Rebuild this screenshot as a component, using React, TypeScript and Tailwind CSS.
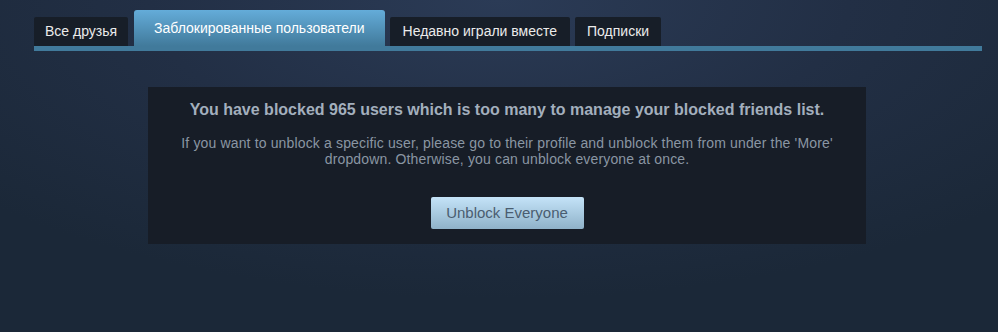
import React from "react";

export default function App() {
  const font = { fontFamily: '"Liberation Sans", Arial, sans-serif' };
  return (
    <div
      className="w-[998px] h-[332px] overflow-hidden bg-[#1b2838] bg-[radial-gradient(ellipse_70%_90%_at_50%_0%,#2b3b56_0%,#222f45_50%,#1b2838_100%)]"
      style={font}
    >
      <div className="pl-[34px] pr-[16px] pt-[10px]">
        <div className="flex items-end gap-[5px] h-[36px]">
          <div className="h-[29px] px-[11px] bg-[#171e28] text-[#ebebeb] text-[14px] flex items-center rounded-t-[2px] mr-[1px]">
            Все друзья
          </div>
          <div className="h-[36px] px-[20px] bg-[linear-gradient(to_bottom,#64acd9,#417a9b)] text-white text-[14px] flex items-start pt-[10px] leading-[16px] rounded-t-[3px]">
            Заблокированные пользователи
          </div>
          <div className="h-[29px] px-[13px] bg-[#171e28] text-[#ebebeb] text-[14px] flex items-center rounded-t-[2px]">
            Недавно играли вместе
          </div>
          <div className="h-[29px] px-[12px] bg-[#171e28] text-[#ebebeb] text-[14px] flex items-center rounded-t-[2px]">
            Подписки
          </div>
        </div>
        <div className="h-[5px] bg-[#417a9b]" />
      </div>
      <div className="mt-[36px] ml-[148px] w-[718px] h-[157px] bg-[#171d27] flex flex-col items-center pt-[13px]">
        <div className="text-[16px] font-bold text-[#a3afbd] leading-[20px]">
          You have blocked 965 users which is too many to manage your blocked friends list.
        </div>
        <div className="mt-[15px] text-[14px] text-[#8a96a3] leading-[16px] text-center w-[680px] tracking-[0.15px]">
          If you want to unblock a specific user, please go to their profile and unblock them from under the 'More' dropdown. Otherwise, you can unblock everyone at once.
        </div>
        <button className="mt-[30px] w-[153px] h-[32px] rounded-[2px] bg-[linear-gradient(to_bottom,#c4e3f8,#8fb2c9)] text-[#4a5d70] text-[15px] flex items-center justify-center">
          Unblock Everyone
        </button>
      </div>
    </div>
  );
}
